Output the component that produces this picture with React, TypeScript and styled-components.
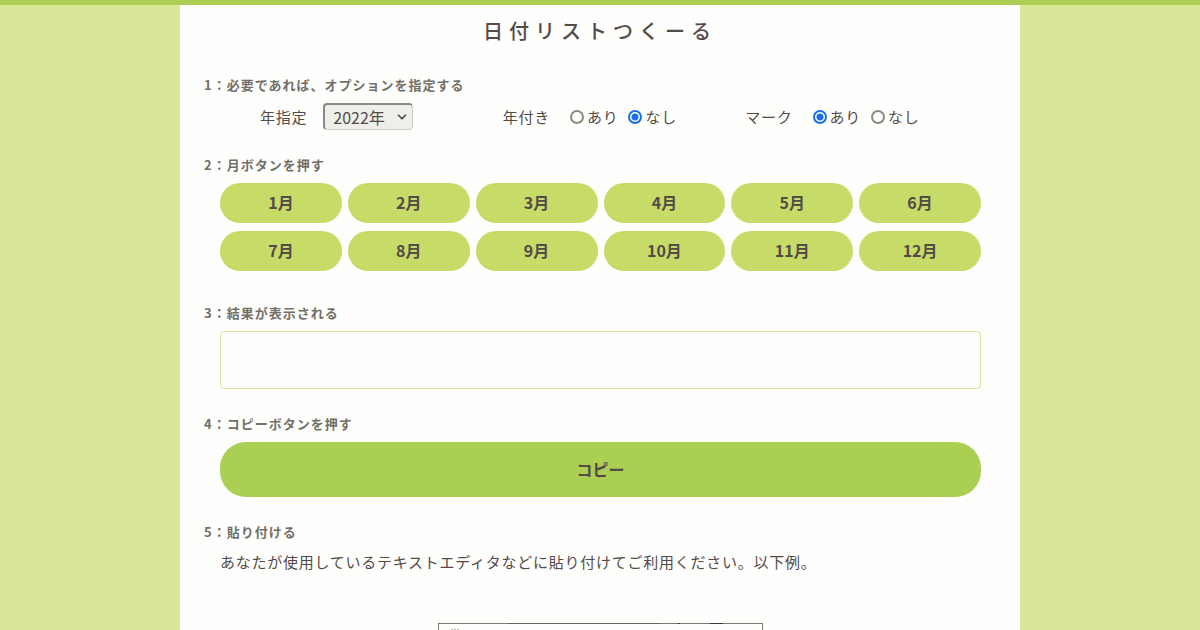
import React, { useState } from "react";
import styled, { createGlobalStyle } from "styled-components";
import { ChevronDown } from "lucide-react";

const c = {
  bar: "#aacf53",
  page: "#d8e698",
  button: "#c7dc68",
  paper: "#fefefd",
  text: "#544a47",
  heading: "#736f66",
  radio: "#1a6fe8",
};

const GlobalStyle = createGlobalStyle`
  *, *::before, *::after { box-sizing: border-box; }
  body {
    margin: 0;
    background: ${c.page};
    color: ${c.text};
    font-family: "Noto Sans CJK JP", sans-serif;
    font-size: 15px;
    line-height: 24px;
    letter-spacing: 0.05em;
  }
  h1, h2, p, figure { margin: 0; }
  button, select, textarea { font-family: inherit; color: inherit; }
`;

const Page = styled.div`
  min-height: 100vh;
  border-top: 5px solid ${c.bar};
`;

const Paper = styled.main`
  display: flex;
  flex-direction: column;
  gap: 23px;
  max-width: 840px;
  min-height: 100vh;
  margin: 0 auto;
  padding: 12px 24px 24px;
  background: ${c.paper};
`;

const Title = styled.h1`
  font-size: 20px;
  line-height: 28px;
  font-weight: 500;
  letter-spacing: 0.3em;
  text-align: center;
  padding-bottom: 5px;
`;

const Section = styled.section<{ $after?: number }>`
  padding-bottom: ${(p) => p.$after ?? 0}px;
`;

const Heading = styled.h2`
  color: ${c.heading};
  font-size: 13px;
  line-height: 24px;
  font-weight: 700;
  letter-spacing: 1px;
`;

const Body = styled.div`
  padding: 6px 15px 0 16px;
`;

const Options = styled.div`
  display: grid;
  grid-template-columns: repeat(3, 1fr);
  column-gap: 16px;
  padding: 6px 24px 0 56px;
`;

const Option = styled.div`
  display: flex;
  align-items: center;
  gap: 16px;
  height: 27px;
`;

const Choices = styled.div`
  display: flex;
  align-items: center;
  gap: 10px;
  padding-left: 4px;
`;

const Choice = styled.label`
  display: flex;
  align-items: center;
  gap: 3px;
`;

const Radio = styled.input`
  appearance: none;
  flex: none;
  width: 14px;
  height: 14px;
  margin: 0;
  border: 2px solid #8b8984;
  border-radius: 50%;
  background: ${c.paper};
  &:checked {
    border-color: ${c.radio};
    background: radial-gradient(circle, ${c.radio} 3px, ${c.paper} 4px);
  }
`;

const SelectWrap = styled.span`
  position: relative;
  display: inline-flex;
  svg {
    position: absolute;
    right: 4px;
    top: 7px;
    pointer-events: none;
  }
`;

const Select = styled.select`
  appearance: none;
  width: 90px;
  height: 27px;
  padding: 0 8px 2px;
  font-size: 16px;
  line-height: 24px;
  background: #efefea;
  border: 2px solid #8c8984;
  border-right: 1px dotted #aaa;
  border-bottom: 1px dotted #aaa;
  border-radius: 4px;
`;

const Months = styled.div`
  display: grid;
  grid-template-columns: repeat(6, 1fr);
  gap: 8px 6px;
`;

const PillButton = styled.button<{ $large?: boolean }>`
  width: 100%;
  height: ${(p) => (p.$large ? 55 : 40)}px;
  padding: 0 0 2px;
  border: 0;
  border-radius: ${(p) => (p.$large ? 26 : 20)}px;
  background: ${(p) => (p.$large ? c.bar : c.button)};
  font-size: 16px;
  line-height: 24px;
  font-weight: 700;
  cursor: pointer;
`;

const Result = styled.textarea`
  display: block;
  width: 100%;
  height: 58px;
  padding: 8px;
  border: 1px solid ${c.page};
  border-radius: 4px;
  background: ${c.paper};
  resize: none;
`;

const Example = styled.figure`
  width: 325px;
  height: 240px;
  margin: 49px auto 0;
  border: 1px solid #7b7a74;
  svg { display: block; }
`;

const MONTHS = Array.from({ length: 12 }, (_, i) => i + 1);

function RadioGroup({ name, label, initial }: { name: string; label: string; initial: string }) {
  const [value, setValue] = useState(initial);
  return (
    <Option role="radiogroup" aria-label={label}>
      <span>{label}</span>
      <Choices>
        {["あり", "なし"].map((v) => (
          <Choice key={v}>
            <Radio type="radio" name={name} checked={value === v} onChange={() => setValue(v)} />
            {v}
          </Choice>
        ))}
      </Choices>
    </Option>
  );
}

export default function App() {
  const [year, setYear] = useState("2022");
  const [result, setResult] = useState("");
  const build = (month: number) => {
    const days = new Date(Number(year), month, 0).getDate();
    setResult(Array.from({ length: days }, (_, i) => `${month}/${i + 1}`).join("\n"));
  };
  return (
    <>
      <GlobalStyle />
      <Page>
        <Paper>
          <Title>日付リストつくーる</Title>
          <Section>
            <Heading>1：必要であれば、オプションを指定する</Heading>
            <Options>
              <Option>
                <label htmlFor="year">年指定</label>
                <SelectWrap>
                  <Select id="year" value={year} onChange={(e) => setYear(e.target.value)}>
                    <option value="2022">2022年</option>
                    <option value="2023">2023年</option>
                  </Select>
                  <ChevronDown size={14} strokeWidth={3} aria-hidden />
                </SelectWrap>
              </Option>
              <RadioGroup name="with-year" label="年付き" initial="なし" />
              <RadioGroup name="mark" label="マーク" initial="あり" />
            </Options>
          </Section>
          <Section $after={7}>
            <Heading>2：月ボタンを押す</Heading>
            <Body>
              <Months>
                {MONTHS.map((m) => (
                  <PillButton key={m} type="button" onClick={() => build(m)}>
                    {m}月
                  </PillButton>
                ))}
              </Months>
            </Body>
          </Section>
          <Section>
            <Heading id="result">3：結果が表示される</Heading>
            <Body>
              <Result aria-labelledby="result" value={result} readOnly />
            </Body>
          </Section>
          <Section>
            <Heading>4：コピーボタンを押す</Heading>
            <Body>
              <PillButton $large type="button" onClick={() => navigator.clipboard?.writeText(result)}>
                コピー
              </PillButton>
            </Body>
          </Section>
          <Section>
            <Heading>5：貼り付ける</Heading>
            <Body>
              <p>あなたが使用しているテキストエディタなどに貼り付けてご利用ください。以下例。</p>
              <Example>
                <svg width="323" height="20" viewBox="0 0 323 20" overflow="visible" aria-hidden>
                  <path d="M70 -0.5H222" stroke="#4f4d48" strokeDasharray="1 1" />
                  <path d="M239 -0.5h2M271 -0.5h13" stroke="#3c3638" />
                  <path d="M12 5.5h8" stroke="#b5b5ae" strokeDasharray="2 1" />
                </svg>
              </Example>
            </Body>
          </Section>
        </Paper>
      </Page>
    </>
  );
}
